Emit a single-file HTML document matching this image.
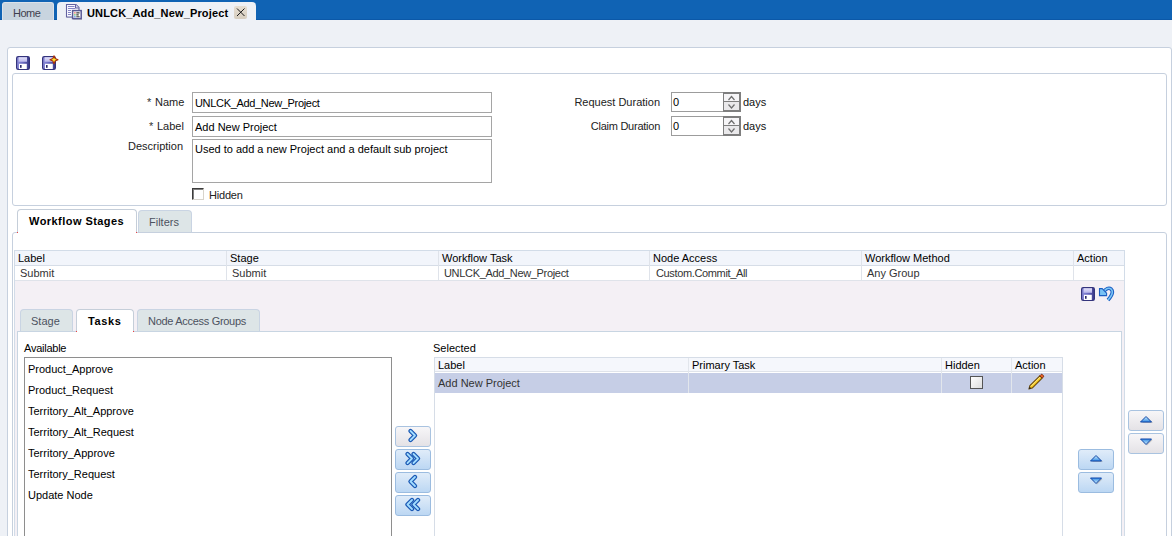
<!DOCTYPE html>
<html><head><meta charset="utf-8">
<style>
*{box-sizing:border-box;margin:0;padding:0}
html,body{width:1172px;height:536px;overflow:hidden;background:#eef1f6;font-family:"Liberation Sans",sans-serif;font-size:11px;color:#000}
.a{position:absolute}
.t{position:absolute;white-space:nowrap;line-height:13px}
#bar{left:0;top:0;width:1172px;height:20px;background:#1063b4;border-bottom:1px solid #0b58a8}
.tab{position:absolute;top:2px;height:18px;border-radius:4px 4px 0 0}
#home{left:2px;width:52px;background:#c8d4df;border:1px solid #dbe2ea;border-bottom:none;border-radius:3px 3px 0 0}
#act{left:57px;width:199px;background:#eef1f6}
.panel{position:absolute;background:#fff;border:1px solid #c6d0de;border-radius:3px}
.inp{position:absolute;background:#fff;border:1px solid #a5a5a5}
.grid{position:absolute;border-color:#d6dde7;border-style:solid}
.btn{position:absolute;border:1px solid #9bbce0;border-radius:3px;background:linear-gradient(#e0ecf9,#bcd7f3)}
.btng{position:absolute;border:1px solid #a9c3e0;border-radius:3px;background:linear-gradient(#f7f6f8,#e4e2e6)}
.stab{position:absolute;border:1px solid #c9d4e3;border-bottom:none;border-radius:4px 4px 0 0;background:#dde5e7}
</style></head><body>
<!-- top bar -->
<div class="a" id="bar"></div>
<div class="tab" id="home"></div>
<div class="t" style="left:13px;top:7px;color:#3e3e4e;letter-spacing:-0.5px">Home</div>
<div class="tab" id="act"></div>
<svg class="a" style="left:65px;top:3px" width="18" height="17" viewBox="0 0 18 17">
 <path d="M2 14.5h12" stroke="#c8ccd8" stroke-width="1"/>
 <path d="M1.5 1.5h9.5l3 3v9.5h-12.5z" fill="#fafaff" stroke="#6262a0" stroke-width="1.1"/>
 <path d="M10.5 1.5v3.5h3.5" fill="#dcdcf0" stroke="#6262a0" stroke-width="1"/>
 <path d="M3 3.5h6.5M3 5.5h7.5M3 7.5h3M3 9.5h3M3 11.5h3" stroke="#8484c4" stroke-width="1"/>
 <rect x="8.2" y="16" width="8.8" height="1" fill="#c0c0c8"/>
 <rect x="7.6" y="7.6" width="8.6" height="8" fill="#fff" stroke="#5a5a96" stroke-width="1.5"/>
 <rect x="9.3" y="9.3" width="1.2" height="1.2" fill="#e8301c"/><rect x="9.3" y="11.3" width="1.2" height="1.2" fill="#20a028"/><rect x="9.3" y="13.2" width="1.2" height="1.2" fill="#2060e0"/>
 <path d="M11.3 9.9h3.3M11.3 11.9h2.4M11.3 13.8h3.3" stroke="#3a3a3a" stroke-width="1.1"/>
</svg>
<div class="t" style="left:87px;top:7px;font-weight:bold;letter-spacing:0.15px">UNLCK_Add_New_Project</div>
<div class="a" style="left:234px;top:6px;width:13px;height:13px;background:linear-gradient(#e6ded2,#d6cdbf);border-radius:2px"></div>
<svg class="a" style="left:234px;top:6px" width="13" height="13"><path d="M3 2.5l7.5 7.5M10.5 2.5l-7.5 7.5" stroke="#1a1a1a" stroke-width="1"/></svg>

<!-- outer panel -->
<div class="panel" style="left:7px;top:47px;width:1165px;height:500px"></div>
<!-- floppy icons -->
<svg class="a" style="left:16px;top:56px" width="15" height="15" viewBox="0 0 15 15">
 <defs><linearGradient id="fl" x1="0" x2="1"><stop offset="0" stop-color="#9090dc"/><stop offset="0.5" stop-color="#6a6ac0"/><stop offset="1" stop-color="#3a3a8a"/></linearGradient><linearGradient id="fll" x1="0" y1="0" x2="0" y2="1"><stop offset="0" stop-color="#e4e2fa"/><stop offset="1" stop-color="#b8b6ea"/></linearGradient></defs>
 <rect x="0.6" y="0.6" width="12.8" height="12.8" rx="1.6" fill="url(#fl)" stroke="#34347c" stroke-width="1.2"/>
 <rect x="2.6" y="1.2" width="8.4" height="4.6" fill="url(#fll)"/>
 <rect x="3" y="7.8" width="7.8" height="5.2" fill="#fff"/>
 <rect x="4" y="9" width="1.6" height="2.8" fill="#2a2a6a"/>
</svg>
<svg class="a" style="left:42px;top:55px" width="17" height="16" viewBox="0 0 17 16">
 <rect x="0.6" y="1.6" width="12.8" height="12.8" rx="1.6" fill="url(#fl)" stroke="#34347c" stroke-width="1.2"/>
 <rect x="2.6" y="2.2" width="8.4" height="4.6" fill="url(#fll)"/>
 <rect x="3" y="8.8" width="7.8" height="5.2" fill="#fff"/>
 <rect x="4" y="10" width="1.6" height="2.8" fill="#2a2a6a"/>
 <path d="M12 0.8l1.2 2.8 2.8 1.2-2.8 1.2-1.2 2.8-1.2-2.8-2.8-1.2 2.8-1.2z" fill="#ffe82a" stroke="#a8300c" stroke-width="1.1" stroke-linejoin="round"/>
</svg>

<!-- form panel -->
<div class="panel" style="left:12px;top:73px;width:1155px;height:133px"></div>
<div class="t" style="left:147px;top:96px;color:#333">*</div>
<div class="t" style="left:155px;top:96px;color:#222">Name</div>
<div class="t" style="left:149px;top:120px;color:#333">*</div>
<div class="t" style="left:157px;top:120px;color:#222">Label</div>
<div class="t" style="left:128px;top:140px;color:#222">Description</div>
<div class="inp" style="left:192px;top:92px;width:300px;height:21px"></div>
<div class="t" style="left:195px;top:97px;letter-spacing:-0.33px">UNLCK_Add_New_Project</div>
<div class="inp" style="left:192px;top:116px;width:300px;height:21px"></div>
<div class="t" style="left:195px;top:121px">Add New Project</div>
<div class="inp" style="left:192px;top:139px;width:300px;height:44px"></div>
<div class="t" style="left:195px;top:143px">Used to add a new Project and a default sub project</div>
<div class="a" style="left:192px;top:188px;width:12px;height:12px;background:#fff;border:1px solid;border-color:#3c3c3c #d8d4cc #d8d4cc #3c3c3c;box-shadow:inset 1px 1px 0 #808080"></div>
<div class="t" style="left:209px;top:189px;color:#222;letter-spacing:-0.2px">Hidden</div>

<div class="t" style="right:512px;top:96px;color:#222">Request Duration</div>
<div class="t" style="right:512px;top:120px;color:#222;letter-spacing:-0.25px">Claim Duration</div>
<svg class="a" style="left:671px;top:92px" width="70" height="20" viewBox="0 0 70 20" shape-rendering="crispEdges">
 <rect x="0.5" y="0.5" width="69" height="19" fill="#fff" stroke="#9c9c9c"/>
 <rect x="52" y="0" width="18" height="20" fill="#7e7e7e"/>
 <rect x="53" y="2" width="15" height="7" fill="#f6f5f7"/>
 <rect x="53" y="10" width="15" height="8" fill="#eae9eb"/>
 <path d="M57.5 8 L60.5 4.5 L63.5 8" fill="none" stroke="#6e6e6e" stroke-width="1.2" shape-rendering="auto"/>
 <path d="M57.5 12.5 L60.5 16 L63.5 12.5" fill="none" stroke="#6e6e6e" stroke-width="1.2" shape-rendering="auto"/>
</svg>
<div class="t" style="left:673px;top:96px">0</div>
<svg class="a" style="left:671px;top:116px" width="70" height="20" viewBox="0 0 70 20" shape-rendering="crispEdges">
 <rect x="0.5" y="0.5" width="69" height="19" fill="#fff" stroke="#9c9c9c"/>
 <rect x="52" y="0" width="18" height="20" fill="#7e7e7e"/>
 <rect x="53" y="2" width="15" height="7" fill="#f6f5f7"/>
 <rect x="53" y="10" width="15" height="8" fill="#eae9eb"/>
 <path d="M57.5 8 L60.5 4.5 L63.5 8" fill="none" stroke="#6e6e6e" stroke-width="1.2" shape-rendering="auto"/>
 <path d="M57.5 12.5 L60.5 16 L63.5 12.5" fill="none" stroke="#6e6e6e" stroke-width="1.2" shape-rendering="auto"/>
</svg>
<div class="t" style="left:673px;top:120px">0</div>
<div class="t" style="left:743px;top:96px;color:#111">days</div>
<div class="t" style="left:743px;top:120px;color:#111">days</div>

<!-- Workflow tabs -->
<div class="panel" style="left:12px;top:232px;width:1155px;height:320px"></div>
<div class="a" style="left:17px;top:209px;width:120px;height:24px;background:#fff;border:1px solid #c5ced9;border-bottom:none;border-radius:4px 4px 0 0"></div>
<div class="t" style="left:29px;top:215px;font-weight:bold;letter-spacing:0.45px">Workflow Stages</div>
<div class="stab" style="left:138px;top:210px;width:54px;height:22px"></div>
<div class="t" style="left:149px;top:216px;color:#4c5260">Filters</div>

<!-- main table -->
<div class="a" style="left:14px;top:250px;width:1111px;height:300px;background:#f4f0f5;border:1px solid #d2dce8"></div>
<div class="a" style="left:15px;top:251px;width:1109px;height:15px;background:#f2f5fb;border-bottom:1px solid #d6dde7"></div>
<div class="a" style="left:15px;top:266px;width:1109px;height:15px;background:#fff;border-bottom:1px solid #dfe3ea"></div>
<div class="a" style="left:226px;top:251px;width:1px;height:29px;background:#dfe3ea"></div>
<div class="a" style="left:438px;top:251px;width:1px;height:29px;background:#dfe3ea"></div>
<div class="a" style="left:649px;top:251px;width:1px;height:29px;background:#dfe3ea"></div>
<div class="a" style="left:861px;top:251px;width:1px;height:29px;background:#dfe3ea"></div>
<div class="a" style="left:1073px;top:251px;width:1px;height:29px;background:#dfe3ea"></div>
<div class="t" style="left:18px;top:252px">Label</div>
<div class="t" style="left:230px;top:252px">Stage</div>
<div class="t" style="left:442px;top:252px">Workflow Task</div>
<div class="t" style="left:653px;top:252px">Node Access</div>
<div class="t" style="left:865px;top:252px">Workflow Method</div>
<div class="t" style="left:1077px;top:252px">Action</div>
<div class="t" style="left:20px;top:267px;color:#333">Submit</div>
<div class="t" style="left:232px;top:267px;color:#333">Submit</div>
<div class="t" style="left:444px;top:267px;color:#333;letter-spacing:-0.33px">UNLCK_Add_New_Project</div>
<div class="t" style="left:656px;top:267px;color:#333;letter-spacing:-0.36px">Custom.Commit_All</div>
<div class="t" style="left:867px;top:267px;color:#333">Any Group</div>

<!-- save / undo -->
<svg class="a" style="left:1081px;top:287px" width="15" height="15" viewBox="0 0 15 15">
 <rect x="0.6" y="0.6" width="12.8" height="12.8" rx="1.6" fill="url(#fl)" stroke="#34347c" stroke-width="1.2"/>
 <rect x="2.6" y="1.2" width="8.4" height="4.6" fill="url(#fll)"/>
 <rect x="3" y="7.8" width="7.8" height="5.2" fill="#fff"/>
 <rect x="4" y="9" width="1.6" height="2.8" fill="#2a2a6a"/>
</svg>
<svg class="a" style="left:1098px;top:285px" width="17" height="17" viewBox="0 0 17 17">
 <path d="M5.5 7.5 C7.5 3.5 11 2.2 13.2 4.2 C15.3 6.3 14 10.5 10 15" fill="none" stroke="#1b5ec2" stroke-width="3.6" stroke-linecap="butt"/>
 <path d="M5.5 7.5 C7.5 3.5 11 2.2 13.2 4.2 C15.3 6.3 14 10.5 10 15" fill="none" stroke="#7cc6f6" stroke-width="1.6" stroke-linecap="butt"/>
 <path d="M1.5 3.6 L4.2 3.6 L8.6 8.2 L8.6 10.6 L1.5 10.6 Z" fill="#78c2f4" stroke="#1b5ec2" stroke-width="1.1" stroke-linejoin="miter"/>
</svg>

<!-- sub tabs -->
<div class="stab" style="left:20px;top:309px;width:53px;height:23px"></div>
<div class="t" style="left:31px;top:315px;color:#4c5260">Stage</div>
<div class="a" style="left:76px;top:309px;width:58px;height:23px;background:#fff;border:1px solid #c5ced9;border-bottom:none;border-radius:4px 4px 0 0"></div>
<div class="t" style="left:88px;top:315px;font-weight:bold;letter-spacing:0.6px">Tasks</div>
<div class="stab" style="left:137px;top:309px;width:123px;height:23px"></div>
<div class="t" style="left:148px;top:315px;color:#4c5260;letter-spacing:-0.3px">Node Access Groups</div>

<!-- sub panel -->
<div class="a" style="left:17px;top:331px;width:1105px;height:220px;background:#fff;border:1px solid #c8d5e2"></div>
<div class="a" style="left:77px;top:331px;width:56px;height:2px;background:#fff"></div>
<div class="t" style="left:24px;top:342px;letter-spacing:-0.25px">Available</div>
<div class="inp" style="left:24px;top:357px;width:368px;height:200px;border-color:#8e8e8e"></div>
<div class="t" style="left:28px;top:363px">Product_Approve</div>
<div class="t" style="left:28px;top:384px">Product_Request</div>
<div class="t" style="left:28px;top:405px">Territory_Alt_Approve</div>
<div class="t" style="left:28px;top:426px">Territory_Alt_Request</div>
<div class="t" style="left:28px;top:447px">Territory_Approve</div>
<div class="t" style="left:28px;top:468px">Territory_Request</div>
<div class="t" style="left:28px;top:489px">Update Node</div>

<!-- shuttle buttons -->
<svg width="0" height="0" style="position:absolute"><defs>
<linearGradient id="tri" x1="0" y1="0" x2="0" y2="1"><stop offset="0" stop-color="#d8f6ff"/><stop offset="1" stop-color="#3088e4"/></linearGradient>
<linearGradient id="trid" x1="0" y1="0" x2="0" y2="1"><stop offset="0" stop-color="#3088e4"/><stop offset="1" stop-color="#d8f6ff"/></linearGradient>
</defs></svg>
<div class="btng" style="left:395px;top:426px;width:36px;height:21px"></div><svg class="a" style="left:395px;top:426px" width="36" height="21" viewBox="0 0 36 21"><path d="M15.5 5 L20 9.5 L15.5 14" fill="none" stroke="#1a58b4" stroke-width="4.4" stroke-linejoin="round" stroke-linecap="round"/><path d="M15.5 5 L20 9.5 L15.5 14" fill="none" stroke="#a2dcff" stroke-width="1.8" stroke-linejoin="round" stroke-linecap="round"/></svg>
<div class="btn" style="left:395px;top:449px;width:36px;height:21px"></div><svg class="a" style="left:395px;top:449px" width="36" height="21" viewBox="0 0 36 21"><path d="M12.5 5 L17 9.5 L12.5 14" fill="none" stroke="#1a58b4" stroke-width="4.4" stroke-linejoin="round" stroke-linecap="round"/><path d="M12.5 5 L17 9.5 L12.5 14" fill="none" stroke="#a2dcff" stroke-width="1.8" stroke-linejoin="round" stroke-linecap="round"/><path d="M18.5 5 L23 9.5 L18.5 14" fill="none" stroke="#1a58b4" stroke-width="4.4" stroke-linejoin="round" stroke-linecap="round"/><path d="M18.5 5 L23 9.5 L18.5 14" fill="none" stroke="#a2dcff" stroke-width="1.8" stroke-linejoin="round" stroke-linecap="round"/></svg>
<div class="btn" style="left:395px;top:472px;width:36px;height:21px"></div><svg class="a" style="left:395px;top:472px" width="36" height="21" viewBox="0 0 36 21"><path d="M20 5 L15.5 9.5 L20 14" fill="none" stroke="#1a58b4" stroke-width="4.4" stroke-linejoin="round" stroke-linecap="round"/><path d="M20 5 L15.5 9.5 L20 14" fill="none" stroke="#a2dcff" stroke-width="1.8" stroke-linejoin="round" stroke-linecap="round"/></svg>
<div class="btn" style="left:395px;top:495px;width:36px;height:21px"></div><svg class="a" style="left:395px;top:495px" width="36" height="21" viewBox="0 0 36 21"><path d="M17 5 L12.5 9.5 L17 14" fill="none" stroke="#1a58b4" stroke-width="4.4" stroke-linejoin="round" stroke-linecap="round"/><path d="M17 5 L12.5 9.5 L17 14" fill="none" stroke="#a2dcff" stroke-width="1.8" stroke-linejoin="round" stroke-linecap="round"/><path d="M23 5 L18.5 9.5 L23 14" fill="none" stroke="#1a58b4" stroke-width="4.4" stroke-linejoin="round" stroke-linecap="round"/><path d="M23 5 L18.5 9.5 L23 14" fill="none" stroke="#a2dcff" stroke-width="1.8" stroke-linejoin="round" stroke-linecap="round"/></svg>

<div class="t" style="left:433px;top:342px">Selected</div>
<div class="a" style="left:434px;top:357px;width:629px;height:200px;background:#fff;border:1px solid #d6dde7"></div>
<div class="a" style="left:435px;top:358px;width:627px;height:14px;background:#f5f7fc;border-bottom:1px solid #dfe3ea"></div>
<div class="a" style="left:435px;top:373px;width:627px;height:20px;background:#c6cee6"></div>
<div class="t" style="left:438px;top:359px">Label</div>
<div class="t" style="left:692px;top:359px">Primary Task</div>
<div class="t" style="left:945px;top:359px">Hidden</div>
<div class="t" style="left:1015px;top:359px">Action</div>
<div class="t" style="left:438px;top:377px;color:#333">Add New Project</div>
<div class="a" style="left:688px;top:358px;width:1px;height:35px;background:#e2e6ec"></div>
<div class="a" style="left:941px;top:358px;width:1px;height:35px;background:#e2e6ec"></div>
<div class="a" style="left:1011px;top:358px;width:1px;height:35px;background:#e2e6ec"></div>
<div class="a" style="left:970px;top:376px;width:13px;height:13px;border:1px solid #555;background:linear-gradient(135deg,#fff,#ddd)"></div>

<svg class="a" style="left:1027px;top:372px" width="18" height="18" viewBox="0 0 19 19">
 <path d="M3 14.5 L13.5 4 L16 6.5 L5.5 17 L2 18 Z" fill="#f5c518" stroke="#6b4a10" stroke-width="1.1" stroke-linejoin="round"/>
 <path d="M4.2 15.2 L14.3 5" stroke="#fff3a0" stroke-width="1"/>
 <path d="M13.5 4 L14.8 2.7 Q15.6 2 16.4 2.8 L17.2 3.6 Q18 4.4 17.3 5.2 L16 6.5 Z" fill="#e8602a" stroke="#7a3010" stroke-width="1"/>
 <path d="M2 18 L2.8 15.6 L4.4 17.2 Z" fill="#222"/>
</svg>
<!-- up/down -->
<div class="btn" style="left:1078px;top:449px;width:36px;height:21px"></div><svg class="a" style="left:1078px;top:449px" width="36" height="21" viewBox="0 0 36 21"><path d="M13 12 L18.5 6.5 L24 12Z" fill="#8a8a8a" opacity="0.45" transform="translate(1,1)"/><path d="M12.5 12 L18 6.5 L23.5 12Z" fill="url(#tri)" stroke="#0f45a8" stroke-width="1"/></svg>
<div class="btn" style="left:1078px;top:472px;width:36px;height:21px"></div><svg class="a" style="left:1078px;top:472px" width="36" height="21" viewBox="0 0 36 21"><path d="M12.5 6 L23.5 6 L18 11.5Z" fill="#8a8a8a" opacity="0.45" transform="translate(1,1)"/><path d="M12.5 6 L23.5 6 L18 11.5Z" fill="url(#trid)" stroke="#0f45a8" stroke-width="1"/></svg>
<div class="btng" style="left:1128px;top:410px;width:36px;height:21px"></div><svg class="a" style="left:1128px;top:410px" width="36" height="21" viewBox="0 0 36 21"><path d="M13 12 L18.5 6.5 L24 12Z" fill="#8a8a8a" opacity="0.45" transform="translate(1,1)"/><path d="M12.5 12 L18 6.5 L23.5 12Z" fill="url(#tri)" stroke="#0f45a8" stroke-width="1"/></svg>
<div class="btng" style="left:1128px;top:433px;width:36px;height:21px"></div><svg class="a" style="left:1128px;top:433px" width="36" height="21" viewBox="0 0 36 21"><path d="M12.5 6 L23.5 6 L18 11.5Z" fill="#8a8a8a" opacity="0.45" transform="translate(1,1)"/><path d="M12.5 6 L23.5 6 L18 11.5Z" fill="url(#trid)" stroke="#0f45a8" stroke-width="1"/></svg>
<div class="a" style="left:17px;top:232px;width:1px;height:1px;background:#f04040"></div><div class="a" style="left:136px;top:232px;width:1px;height:1px;background:#f04040"></div><div class="a" style="left:76px;top:331px;width:1px;height:1px;background:#f04040"></div><div class="a" style="left:133px;top:331px;width:1px;height:1px;background:#f04040"></div>
</body></html>
